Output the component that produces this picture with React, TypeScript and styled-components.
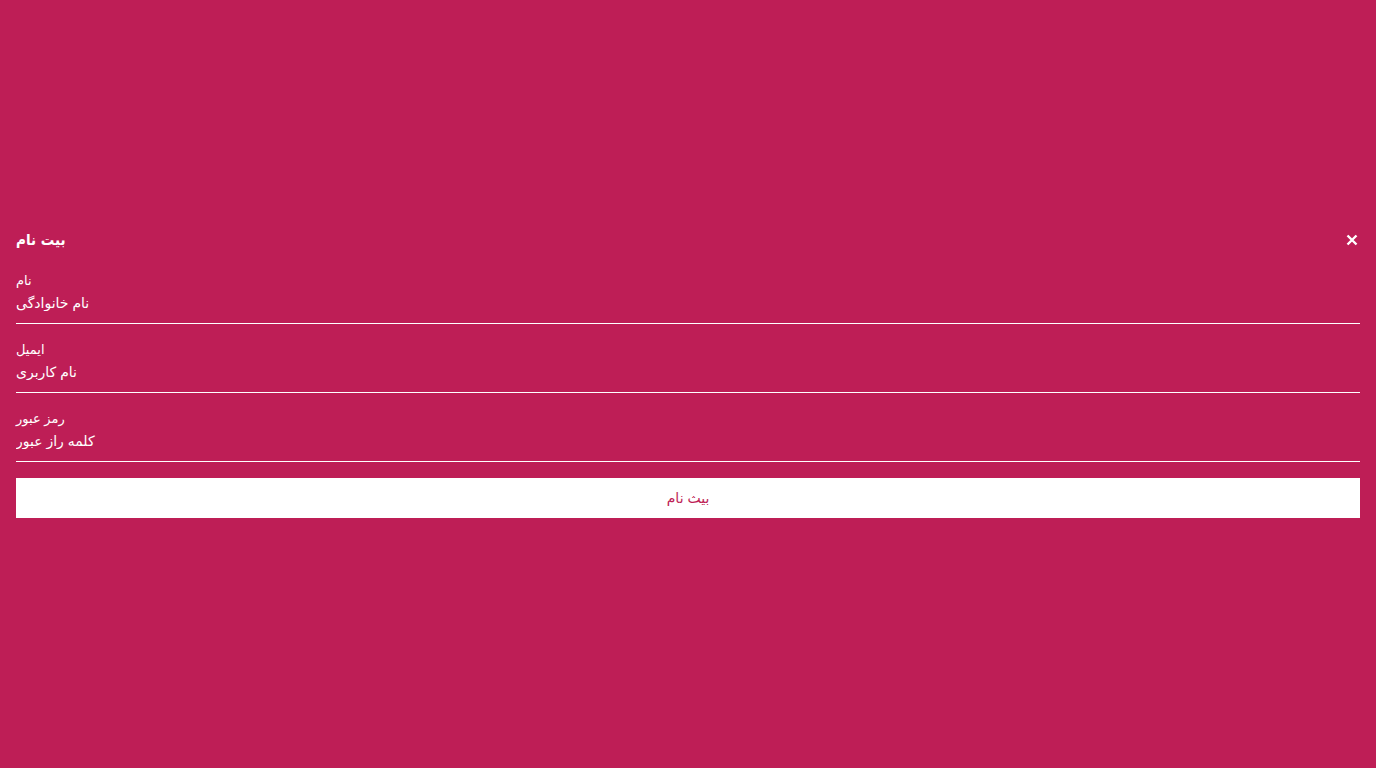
import React from "react";
import styled, { createGlobalStyle } from "styled-components";

const Global = createGlobalStyle`
  html, body { margin: 0; padding: 0; background: #be1e56; }
  body { font-family: "Liberation Sans", "DejaVu Sans", Arial, sans-serif; }
  * { box-sizing: border-box; }
`;

const Page = styled.div`
  min-height: 100vh;
  display: flex;
  flex-direction: column;
  justify-content: flex-start;
  padding: 228px 16px 0;
  color: #fff;
`;

const Header = styled.div`
  display: flex;
  justify-content: space-between;
  align-items: center;
  height: 24px;
  margin-bottom: 21px;
`;

const Title = styled.h2`
  margin: 0;
  font-family: "DejaVu Sans Condensed", "DejaVu Sans", sans-serif;
  font-size: 15px;
  font-weight: bold;
  color: #fff;
`;

const Close = styled.button`
  background: none;
  border: none;
  padding: 0;
  margin: 0;
  width: 16px;
  height: 16px;
  display: flex;
  align-items: center;
  justify-content: center;
  cursor: pointer;
`;

const Field = styled.label`
  display: flex;
  flex-direction: column;
  border-bottom: 1px solid #fff;
  margin-bottom: 18px;
`;

const Label = styled.span`
  font-size: 13px;
  color: #fff;
  line-height: 16px;
`;

const Input = styled.input`
  background: transparent;
  border: none;
  outline: none;
  color: #fff;
  font-family: inherit;
  font-size: 14px;
  height: 34px;
  padding: 0 0 6px;
  text-align: left;
  &::placeholder { color: #fff; opacity: 1; }
`;

const Submit = styled.button`
  margin-top: -2px;
  height: 40px;
  width: 100%;
  background: #fff;
  border: none;
  color: #be1e56;
  font-family: inherit;
  font-size: 14px;
  cursor: pointer;
`;

const fields = [
  { label: "نام", placeholder: "نام خانوادگی", type: "text" },
  { label: "ایمیل", placeholder: "نام کاربری", type: "text" },
  { label: "رمز عبور", placeholder: "کلمه راز عبور", type: "password" },
];

export default function App() {
  return (
    <>
      <Global />
      <Page>
        <Header>
          <Title>بیت نام</Title>
          <Close aria-label="close">
            <svg width="12" height="12" viewBox="0 0 12 12">
              <path d="M1.5 1.5 L10.5 10.5 M10.5 1.5 L1.5 10.5" stroke="#fff" strokeWidth="2.4" strokeLinecap="butt" />
            </svg>
          </Close>
        </Header>
        {fields.map((f) => (
          <Field key={f.label}>
            <Label>{f.label}</Label>
            <Input type="text" placeholder={f.placeholder} />
          </Field>
        ))}
        <Submit>بیث نام</Submit>
      </Page>
    </>
  );
}
